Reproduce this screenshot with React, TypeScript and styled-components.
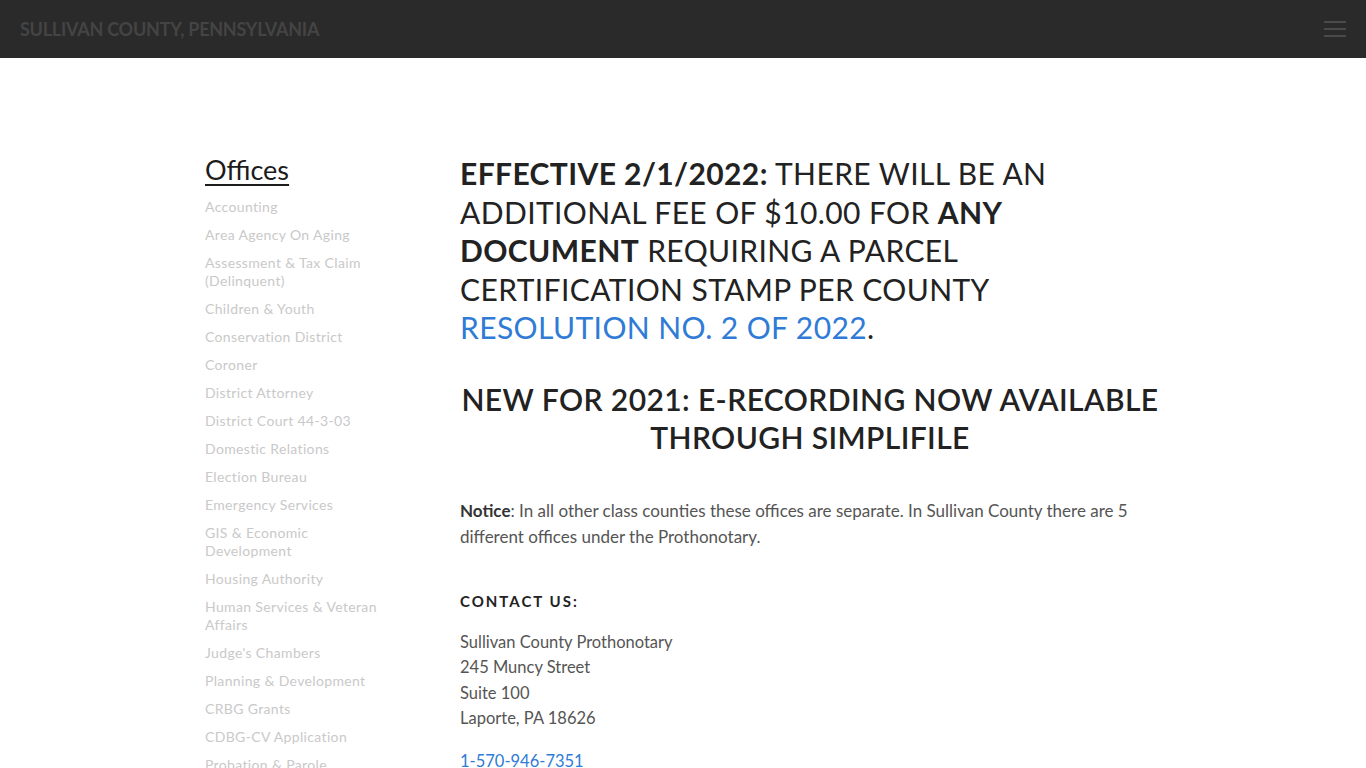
import styled, { createGlobalStyle } from "styled-components";

const GlobalStyle = createGlobalStyle`
    html, body {
        margin: 0;
        padding: 0;
        background: #ffffff;
        font-family: Lato, "Noto Sans", sans-serif;
    }
    * {
        box-sizing: border-box;
    }
`;

const NavBar = styled.header`
    height: 58px;
    background-color: #2a2a2a;
    display: flex;
    align-items: center;
    justify-content: space-between;
    padding: 0 20px;
`;

const SiteTitle = styled.a`
    color: #444444;
    font-size: 18px;
    font-weight: 700;
    text-transform: uppercase;
    text-decoration: none;
    letter-spacing: -0.25px;
`;

const Burger = styled.button`
    width: 22px;
    height: 16px;
    padding: 0;
    border: 0;
    background: none;
    display: flex;
    flex-direction: column;
    justify-content: space-between;
    cursor: pointer;
    span {
        display: block;
        height: 2px;
        background-color: #4a4a4a;
    }
`;

const Main = styled.main`
    width: 956px;
    margin: 0 auto;
    padding-top: 96px;
    display: grid;
    grid-template-columns: 255px 1fr;
`;

const Sidebar = styled.nav`
    width: 180px;
`;

const SideTitle = styled.h2`
    margin: 0 0 12px;
    font-size: 27px;
    line-height: 32px;
    font-weight: 400;
    color: #1c1c1c;
    text-decoration: underline;
    text-underline-offset: 4px;
    text-decoration-thickness: 1.5px;
`;

const LinkList = styled.ul`
    list-style: none;
    margin: 0;
    padding: 0;
    display: flex;
    flex-direction: column;
    gap: 10px;
`;

const SideLink = styled.a`
    display: block;
    font-size: 14px;
    line-height: 18px;
    color: #c9c9c9;
    text-decoration: none;
    letter-spacing: 0.35px;
`;

const Content = styled.section`
    width: 700px;
`;

const Headline = styled.h1<{ center?: boolean }>`
    margin: 0;
    font-size: 30px;
    line-height: 38.5px;
    font-weight: ${(props) => (props.center ? 600 : 400)};
    letter-spacing: 0.4px;
    text-transform: uppercase;
    color: #222222;
    text-align: ${(props) => (props.center ? "center" : "left")};
    strong {
        font-weight: 700;
    }
    & + & {
        margin-top: 33px;
    }
`;

const BlueLink = styled.a`
    color: #2f7bd6;
    text-decoration: none;
`;

const Paragraph = styled.p`
    margin: 41px 0 0;
    font-size: 17px;
    line-height: 26px;
    color: #555555;
    strong {
        font-weight: 700;
        color: #333333;
    }
`;

const SectionLabel = styled.h3`
    margin: 41px 0 0;
    font-size: 15px;
    line-height: 20px;
    font-weight: 700;
    letter-spacing: 2px;
    text-transform: uppercase;
    color: #222222;
`;

const Address = styled.address`
    margin-top: 19px;
    font-style: normal;
    font-size: 16.5px;
    line-height: 25.5px;
    color: #555555;
`;

const Phone = styled.p`
    margin: 16px 0 0;
    font-size: 16.5px;
    line-height: 26px;
`;

const offices = [
    "Accounting",
    "Area Agency On Aging",
    "Assessment & Tax Claim (Delinquent)",
    "Children & Youth",
    "Conservation District",
    "Coroner",
    "District Attorney",
    "District Court 44-3-03",
    "Domestic Relations",
    "Election Bureau",
    "Emergency Services",
    "GIS & Economic Development",
    "Housing Authority",
    "Human Services & Veteran Affairs",
    "Judge's Chambers",
    "Planning & Development",
    "CRBG Grants",
    "CDBG-CV Application",
    "Probation & Parole",
    "Prothonotary",
    "Public Defender",
];

function App() {
    return (
        <>
            <GlobalStyle />
            <NavBar>
                <SiteTitle href="#">Sullivan County, Pennsylvania</SiteTitle>
                <Burger aria-label="Menu">
                    <span />
                    <span />
                    <span />
                </Burger>
            </NavBar>
            <Main>
                <Sidebar>
                    <SideTitle>Offices</SideTitle>
                    <LinkList>
                        {offices.map((name) => (
                            <li key={name}>
                                <SideLink href="#">{name}</SideLink>
                            </li>
                        ))}
                    </LinkList>
                </Sidebar>
                <Content>
                    <Headline>
                        <strong>Effective 2/1/2022:</strong> There will be an additional fee of $10.00 for{" "}
                        <strong>any document</strong> requiring a parcel certification stamp per county{" "}
                        <BlueLink href="#">Resolution No. 2 of 2022</BlueLink>.
                    </Headline>
                    <Headline center>New for 2021: E-Recording now available through Simplifile</Headline>
                    <Paragraph>
                        <strong>Notice</strong>: In all other class counties these offices are separate. In Sullivan
                        County there are 5 different offices under the Prothonotary.
                    </Paragraph>
                    <SectionLabel>Contact Us:</SectionLabel>
                    <Address>
                        Sullivan County Prothonotary
                        <br />
                        245 Muncy Street
                        <br />
                        Suite 100
                        <br />
                        Laporte, PA 18626
                    </Address>
                    <Phone>
                        <BlueLink href="#">1-570-946-7351</BlueLink>
                    </Phone>
                </Content>
            </Main>
        </>
    );
}

export default App;
